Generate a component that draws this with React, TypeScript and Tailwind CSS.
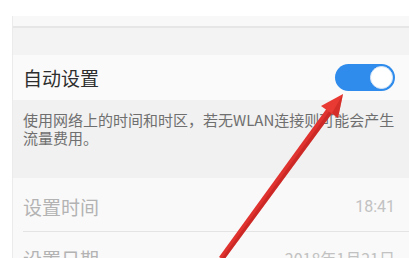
const cjk = { fontFamily: '"Noto Sans CJK SC", "Noto Sans", sans-serif' };

function Toggle() {
  return (
    <div className="flex h-[27px] w-[60px] items-center justify-end rounded-full bg-[#2f8cec] px-[2px]">
      <div className="h-[23px] w-[23px] rounded-full border border-[#d9e6f5] bg-white" />
    </div>
  );
}

function Arrow() {
  return (
    <svg className="pointer-events-none absolute left-0 top-0" width="409" height="258" viewBox="0 0 409 258">
      {/* shaft, a bit thicker near the head */}
      <polygon points="336,108 330,104 219,257 224,260" fill="#e0322e" />
      <polygon points="336,108 333,106 222,258 224,260" fill="#b8201d" opacity="0.5" />
      {/* head */}
      <polygon points="343,94 321,106 338,118" fill="#e83a33" />
      <polygon points="343,94 338,118 332,113" fill="#c42420" opacity="0.55" />
    </svg>
  );
}

export default function App() {
  return (
    <div className="relative h-[258px] w-[409px] overflow-hidden bg-white pl-[12px] pt-[16px]" style={cjk}>
      <div className="border-l border-[#ebebeb]">
        {/* top strip */}
        <div className="h-[10px] bg-[#f8f8f8]" />
        <div className="h-[2px] bg-[#e6e6e6]" />
        <div className="h-[27px] bg-[#f3f3f3]" />

        {/* auto setting row */}
        <div className="flex h-[45px] items-center justify-between bg-[#fafafa] pl-[10px] pr-[14px]">
          <span className="text-[19px] leading-none text-[#2e2e2e]">自动设置</span>
          <Toggle />
        </div>

        {/* description */}
        <div className="h-[78px] bg-[#f1f1f1] pl-[10px] pt-[11px] text-[15px] leading-[18px] text-[#6f6f6f]">
          <p className="whitespace-nowrap">使用网络上的时间和时区，若无WLAN连接则可能会产生</p>
          <p className="whitespace-nowrap">流量费用。</p>
        </div>

        {/* time row */}
        <div className="bg-[#f9f9f9] pl-[10px]">
          <div className="flex h-[54px] items-center justify-between border-b border-[#e4e4e4] pr-[14px] pt-[4px]">
            <span className="text-[19px] leading-none text-[#b3b3b3]">设置时间</span>
            <span className="text-[16px] leading-none text-[#c2c2c2]" style={{ fontFamily: 'Roboto, "Noto Sans", sans-serif' }}>
              18:41
            </span>
          </div>
          <div className="flex h-[50px] items-center justify-between pr-[14px] pt-[2px]">
            <span className="text-[19px] leading-none text-[#b3b3b3]">设置日期</span>
            <span className="text-[16px] leading-none text-[#c2c2c2]">2018年1月21日</span>
          </div>
        </div>
      </div>
      <Arrow />
    </div>
  );
}
